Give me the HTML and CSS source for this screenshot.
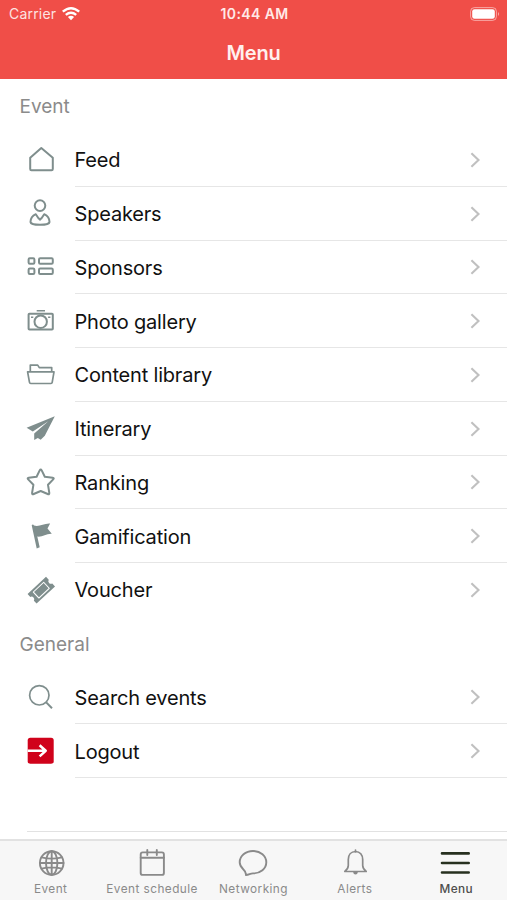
FILE: index.html
```
<!DOCTYPE html>
<html lang="en">
<head>
<meta charset="utf-8">
<title>Menu</title>
<link rel="stylesheet" href="styles.css">
</head>
<body>
<div class="app">
  <header class="header">
    <div class="status">
      <div class="carrier"><span>Carrier</span>
        <svg class="wifi" viewBox="0 0 20 15"><path d="M1.8 5.7Q10-1.4 18.2 5.7M4.8 8.9Q10 4.6 15.2 8.9" fill="none" stroke="currentColor" stroke-width="2.4"/><path d="M6.9 11Q10 8.6 13.1 11L10 14.2z" fill="currentColor"/></svg>
      </div>
      <span class="time">10:44 AM</span>
      <svg class="battery" viewBox="0 0 30 14"><rect x=".6" y=".6" width="25.8" height="12.8" rx="3.8" fill="none" stroke="currentColor" stroke-opacity=".5" stroke-width="1"/><rect x="2.2" y="2.2" width="22.6" height="9.6" rx="2.3" fill="currentColor"/><path d="M28 5Q30 7 28 9z" fill="currentColor" opacity=".55"/></svg>
    </div>
    <h1>Menu</h1>
  </header>
  <main class="list">
    <h2 class="section">Event</h2>
    <a class="row"><svg class="icon" viewBox="0 0 32 32"><path d="M6.2 25V13.7L17.3 4.1 28.8 13.7V25Q28.8 26.2 27.6 26.2H7.4Q6.2 26.2 6.2 25z"/></svg><span class="cell"><span>Feed</span><svg class="chevron" viewBox="0 0 12 18"><path d="M2.4 2.3 9.5 9 2.4 15.7"/></svg></span></a>
    <a class="row"><svg class="icon" viewBox="0 0 32 32"><circle cx="16" cy="7.6" r="5.3"/><path d="M11.8 16.2Q6.6 18.6 6.5 24C7 27.8 25 27.8 25.5 24Q25.4 18.6 20.2 16.2L17.2 20.8H14.8zM16 20V22.5"/></svg><span class="cell"><span>Speakers</span><svg class="chevron" viewBox="0 0 12 18"><path d="M2.4 2.3 9.5 9 2.4 15.7"/></svg></span></a>
    <a class="row"><svg class="icon" viewBox="0 0 32 32"><rect x="4.6" y="7.3" width="5.8" height="5.4" rx="1.2"/><rect x="15" y="7.3" width="13.8" height="5.4" rx="1.2"/><rect x="4.6" y="17.6" width="5.8" height="5.4" rx="1.2"/><rect x="15" y="17.6" width="13.8" height="5.4" rx="1.2"/></svg><span class="cell"><span>Sponsors</span><svg class="chevron" viewBox="0 0 12 18"><path d="M2.4 2.3 9.5 9 2.4 15.7"/></svg></span></a>
    <a class="row"><svg class="icon" viewBox="0 0 32 32"><rect x="4.6" y="8.8" width="24.2" height="15.7" rx=".8"/><circle cx="16.7" cy="16.7" r="6.2"/><path d="M12.7 5.8H21M7 12.2H9.3M24.1 12.2H26.4" stroke-width="1.4"/></svg><span class="cell"><span>Photo gallery</span><svg class="chevron" viewBox="0 0 12 18"><path d="M2.4 2.3 9.5 9 2.4 15.7"/></svg></span></a>
    <a class="row"><svg class="icon thin" viewBox="0 0 32 32"><path d="M6.3 12.3V6.1H13.7L15.3 8.6H27.7V12.3M3.6 12.8H30L28.2 23.4Q28 24.5 27 24.5H6.7Q5.7 24.5 5.5 23.4z"/></svg><span class="cell"><span>Content library</span><svg class="chevron" viewBox="0 0 12 18"><path d="M2.4 2.3 9.5 9 2.4 15.7"/></svg></span></a>
    <a class="row"><svg class="icon solid" viewBox="0 0 32 32"><path d="M30.8 3.2 2.6 14.7 8.8 18.5 24.3 8.2 10.2 20.4V27L13.8 24.9 16.7 26.8 20.8 22.7z"/></svg><span class="cell"><span>Itinerary</span><svg class="chevron" viewBox="0 0 12 18"><path d="M2.4 2.3 9.5 9 2.4 15.7"/></svg></span></a>
    <a class="row"><svg class="icon" viewBox="0 0 32 32"><path d="M15.7 4.4Q16.7 2.5 17.7 4.4L20.8 10.7 28.7 11.7Q30.5 12 29.2 13.4L24 18.8 25.3 26.8Q25.5 28.9 23.7 28L16.7 25 9.7 28Q7.9 28.9 8.1 26.8L9.4 18.8 4.2 13.4Q2.9 12 4.7 11.7L12.6 10.7z"/></svg><span class="cell"><span>Ranking</span><svg class="chevron" viewBox="0 0 12 18"><path d="M2.4 2.3 9.5 9 2.4 15.7"/></svg></span></a>
    <a class="row"><svg class="icon solid" viewBox="0 0 32 32"><path d="M7.7 5.2Q9 3.9 10 5.4C15 7.3 20 3 26.1 3.5L23.5 8.6 27.8 13.7C22 13.4 18.5 17.3 13.3 16.6L15.7 27.3 12.7 28.6z"/></svg><span class="cell"><span>Gamification</span><svg class="chevron" viewBox="0 0 12 18"><path d="M2.4 2.3 9.5 9 2.4 15.7"/></svg></span></a>
    <a class="row last"><svg class="icon solid" viewBox="0 0 32 32"><g transform="rotate(-43 17.3 16.2)"><path d="M4.7 9.6H29.9V13.6A2.7 2.7 0 0 0 29.9 18.8V22.8H4.7V18.8A2.7 2.7 0 0 0 4.7 13.6z"/><rect x="10.2" y="12.1" width="14.2" height="8.2" fill="none" stroke="#fff" stroke-width="1"/></g></svg><span class="cell"><span>Voucher</span><svg class="chevron" viewBox="0 0 12 18"><path d="M2.4 2.3 9.5 9 2.4 15.7"/></svg></span></a>
    <h2 class="section">General</h2>
    <a class="row"><svg class="icon thin" viewBox="0 0 32 32"><circle cx="15.3" cy="14.3" r="9.7"/><path d="M22.2 21.4 28 27.2" stroke-width="2"/></svg><span class="cell"><span>Search events</span><svg class="chevron" viewBox="0 0 12 18"><path d="M2.4 2.3 9.5 9 2.4 15.7"/></svg></span></a>
    <a class="row"><svg class="icon" viewBox="0 0 32 32"><rect x="3.7" y="2.8" width="26" height="26" rx="2.6" fill="#d0021b" stroke="none"/><path d="M3.7 15.8H21.5M15.6 10.3 21.7 15.8 15.6 21.4" stroke="#fff" stroke-width="2.5"/></svg><span class="cell"><span>Logout</span><svg class="chevron" viewBox="0 0 12 18"><path d="M2.4 2.3 9.5 9 2.4 15.7"/></svg></span></a>
    <div class="spacer"></div>
  </main>
  <nav class="tabs">
    <a class="tab"><svg viewBox="0 0 32 32"><circle cx="16.7" cy="16" r="11.8"/><ellipse cx="16.7" cy="16" rx="5.7" ry="11.8"/><path d="M16.7 4.2V27.8M4.9 16H28.5M6.6 10.3Q16.7 13 26.8 10.3M6.6 21.7Q16.7 19 26.8 21.7"/></svg><span>Event</span></a>
    <a class="tab"><svg viewBox="0 0 32 32"><rect x="4.7" y="5.4" width="23.2" height="22.5" rx="2"/><path d="M4.7 10.8H27.9M11.3 3V8M20.8 3V8"/></svg><span>Event schedule</span></a>
    <a class="tab"><svg viewBox="0 0 32 32"><path d="M8.9 28C9.2 26.2 8.5 24.3 6.2 22.2 3.5 19.8 2.7 17.6 2.7 15.3 2.7 9 8.5 4 16 4S29.3 9 29.3 15.3 23.5 26.4 16 26.4C13 26.4 12.3 27.8 8.9 28z"/></svg><span>Networking</span></a>
    <a class="tab"><svg viewBox="0 0 32 32"><path d="M16.5 3V5M16.5 4.5C12 4.5 9.3 8 9.3 12.5V18.5C9.3 21 8 22.7 5.8 24.5H27.2C25 22.7 23.7 21 23.7 18.5V12.5C23.7 8 21 4.5 16.5 4.5z" stroke-width="1.7"/><path d="M14.1 25H18.9Q18.5 27.5 16.5 27.5T14.1 25z" fill="currentColor" stroke="none"/></svg><span>Alerts</span></a>
    <a class="tab active"><svg viewBox="0 0 32 32"><path d="M2 6.4H28.7M2 16H28.7M2 25.5H28.7" stroke-width="2.6"/></svg><span>Menu</span></a>
  </nav>
</div>
</body>
</html>
```
FILE: styles.css
```
* { box-sizing: border-box; }
body {
  margin: 0;
  font-family: Inter, "Liberation Sans", sans-serif;
  background: #fff;
}
.app {
  display: flex;
  flex-direction: column;
  width: 507px;
  height: 900px;
  overflow: hidden;
}
.header {
  flex: none;
  height: 79px;
  background: #f04e48;
  color: #fff;
}
.status {
  display: grid;
  grid-template-columns: 1fr auto 1fr;
  align-items: center;
  height: 27px;
  padding: 0 7px 0 9px;
  font-size: 14px;
  letter-spacing: 0.2px;
}
.carrier {
  display: flex;
  align-items: center;
  gap: 5px;
  color: #fde3e1;
}
.wifi { width: 20px; height: 15px; color: #fff; }
.time { font-weight: 600; letter-spacing: 0.4px; color: #ffe9e7; }
.battery { width: 30px; height: 14px; justify-self: end; }
h1 {
  margin: 0;
  font-size: 20px;
  line-height: 52px;
  font-weight: 600;
  letter-spacing: -0.2px;
  text-align: center;
  color: #fff0ee;
}
.list { flex: 1; padding-top: 0.3px; }
.section {
  margin: 0;
  height: 53.75px;
  padding-left: 19.5px;
  font-size: 19px;
  line-height: 55.5px;
  font-weight: 400;
  color: #8b8b8b;
}
.row {
  display: flex;
  align-items: center;
  height: 53.75px;
  padding-left: 24px;
}
.icon {
  width: 32px;
  height: 32px;
  margin-right: 18.5px;
  fill: none;
  stroke: #7f8e8d;
  stroke-width: 2;
  stroke-linejoin: round;
}
.icon.thin { stroke-width: 1.7; }
.icon.solid { fill: #7f8e8d; stroke: none; }
.cell {
  display: flex;
  flex: 1;
  align-items: center;
  justify-content: space-between;
  height: 100%;
  padding: 2px 26px 0 0;
  border-bottom: 1px solid #e6e6e6;
  font-size: 20px;
  letter-spacing: -0.18px;
  color: #111;
}
.last .cell { border-bottom-color: transparent; }
.chevron {
  width: 12px;
  height: 18px;
  margin-top: -1px;
  fill: none;
  stroke: #c0c0c0;
  stroke-width: 2.1;
}
.spacer {
  height: 53.5px;
  margin-left: 27px;
  border-bottom: 1px solid #e2e2e2;
}
.tabs {
  flex: none;
  display: grid;
  grid-template-columns: repeat(5, 1fr);
  height: 61px;
  border-top: 2px solid #e2e2e2;
  background: #f7f7f7;
}
.tab {
  display: flex;
  flex-direction: column;
  align-items: center;
  padding-top: 6px;
  font-size: 11.8px;
  letter-spacing: 0.45px;
  font-weight: 400;
  color: #8a8a8a;
  white-space: nowrap;
}
.tab svg {
  width: 32px;
  height: 32px;
  margin-bottom: 3px;
  fill: none;
  stroke: currentColor;
  stroke-width: 1.9;
  stroke-linejoin: round;
  stroke-linecap: round;
}
.tab span { line-height: 14px; }
.tab.active { color: #4d4d4b; font-weight: 500; }
.tab.active svg { color: #27301f; }
```
